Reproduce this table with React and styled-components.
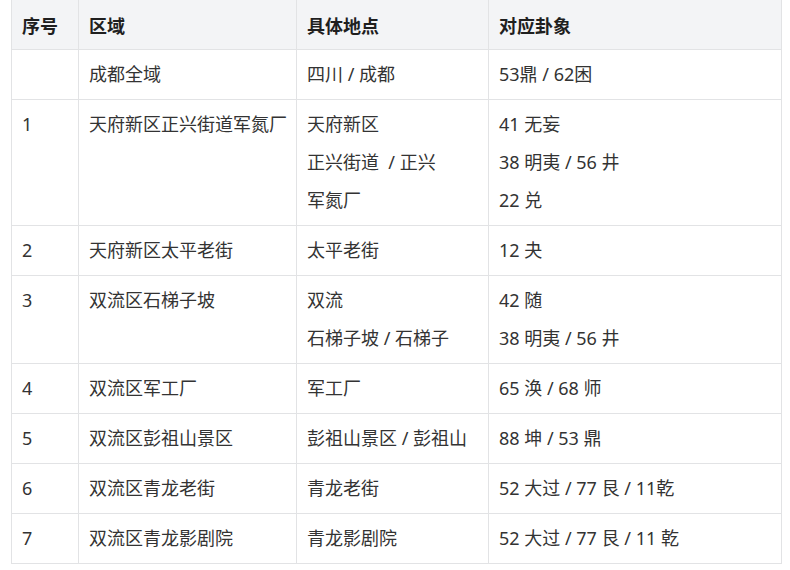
import React from 'react';
import styled, { createGlobalStyle } from 'styled-components';

const GlobalStyle = createGlobalStyle`
  body {
    margin: 0;
    background: #ffffff;
    font-family: "Noto Sans", "Noto Sans CJK SC", sans-serif;
  }
`;

const Wrapper = styled("div")`
  padding: 0 9px 0 11px;
`;

const Table = styled("table")`
  width: 770px;
  border-collapse: collapse;
  table-layout: fixed;
  color: #333333;
  font-size: 18px;
`;

const Col = styled("col")`
  width: ${(props) => props.$w}px;
`;

const HeadCell = styled("th")`
  background: #f3f4f6;
  color: #1f1f1f;
  font-weight: 700;
  text-align: left;
  height: 49px;
  padding: 0 10px;
  border: 1px solid #e2e3e5;
  border-top: none;
`;

const Cell = styled("td")`
  vertical-align: top;
  padding: 5px 10px 6px;
  border: 1px solid #e2e3e5;
  line-height: 38px;
  white-space: nowrap;
`;

const Line = styled("div")`
  white-space: pre;
`;

const rows = [
  { no: "", area: "成都全域", place: ["四川 / 成都"], gua: ["53鼎 / 62困"] },
  { no: "1", area: "天府新区正兴街道军氮厂", place: ["天府新区", "正兴街道  / 正兴", "军氮厂"], gua: ["41 无妄", "38 明夷 / 56 井", "22 兑"] },
  { no: "2", area: "天府新区太平老街", place: ["太平老街"], gua: ["12 夬"] },
  { no: "3", area: "双流区石梯子坡", place: ["双流", "石梯子坡 / 石梯子"], gua: ["42 随", "38 明夷 / 56 井"] },
  { no: "4", area: "双流区军工厂", place: ["军工厂"], gua: ["65 涣 / 68 师"] },
  { no: "5", area: "双流区彭祖山景区", place: ["彭祖山景区 / 彭祖山"], gua: ["88 坤 / 53 鼎"] },
  { no: "6", area: "双流区青龙老街", place: ["青龙老街"], gua: ["52 大过 / 77 艮 / 11乾"] },
  { no: "7", area: "双流区青龙影剧院", place: ["青龙影剧院"], gua: ["52 大过 / 77 艮 / 11 乾"] },
];

export default function App() {
  return (
    <Wrapper>
      <GlobalStyle />
      <Table>
        <colgroup>
          <Col $w={67} />
          <Col $w={218} />
          <Col $w={192} />
          <Col $w={293} />
        </colgroup>
        <thead>
          <tr>
            <HeadCell>序号</HeadCell>
            <HeadCell>区域</HeadCell>
            <HeadCell>具体地点</HeadCell>
            <HeadCell>对应卦象</HeadCell>
          </tr>
        </thead>
        <tbody>
          {rows.map((r, i) => (
            <tr key={i}>
              <Cell>{r.no}</Cell>
              <Cell>{r.area}</Cell>
              <Cell>
                {r.place.map((p, j) => <Line key={j}>{p}</Line>)}
              </Cell>
              <Cell>
                {r.gua.map((g, j) => <Line key={j}>{g}</Line>)}
              </Cell>
            </tr>
          ))}
        </tbody>
      </Table>
    </Wrapper>
  );
}
